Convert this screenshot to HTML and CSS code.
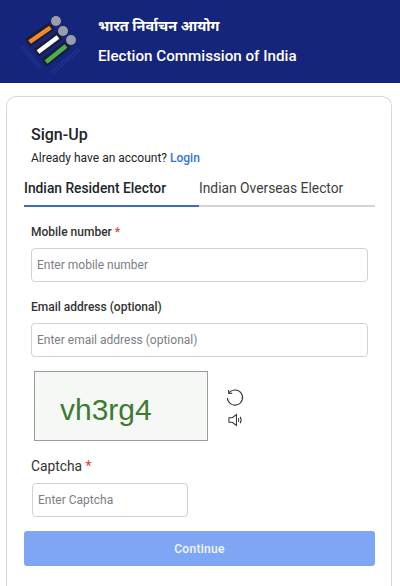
FILE: index.html

```html
<!DOCTYPE html>
<html lang="en">
<head>
  <meta charset="UTF-8">
  <meta name="viewport" content="width=device-width, initial-scale=1">
  <title>Sign-Up</title>
  <link rel="stylesheet" href="styles.css">
</head>
<body>
  <header class="topbar">
    <svg class="logo" width="62" height="70" viewBox="20 3 62 70" fill="none">
      <path d="M22 41 L40 63" stroke="#20308a" stroke-width="5" stroke-dasharray="2 1"/>
      <path d="M52 67 L80 44" stroke="#20308a" stroke-width="5" stroke-dasharray="2 1"/>
      <path d="M27.5 38 L52 20.5" stroke="#1b1d33" stroke-width="9"/>
      <path d="M36 48 L60 30.5" stroke="#1b1d33" stroke-width="9"/>
      <path d="M44 58 L68 39.5" stroke="#1b1d33" stroke-width="9"/>
      <path d="M29.5 37 L50.5 22.5" stroke="#f08a2c" stroke-width="4.5"/>
      <path d="M38 47 L58 32" stroke="#ffffff" stroke-width="4.5"/>
      <path d="M46 57 L66 41" stroke="#4caf50" stroke-width="4.5"/>
      <circle cx="56" cy="16" r="5" fill="#9a9ea8"/>
      <circle cx="63" cy="26" r="5" fill="#9a9ea8"/>
      <circle cx="71" cy="35" r="5" fill="#9a9ea8"/>
    </svg>
    <div class="brand">
      <div class="brand-hi">भारत निर्वाचन आयोग</div>
      <div class="brand-en">Election Commission of India</div>
    </div>
  </header>

  <main class="card">
    <h1 class="title">Sign-Up</h1>
    <p class="have-account">Already have an account? <a href="#" class="login">Login</a></p>

    <div class="tabs">
      <div class="tab active">Indian Resident Elector</div>
      <div class="tab">Indian Overseas Elector</div>
    </div>

    <div class="form">
      <label class="label">Mobile number <span class="req">*</span></label>
      <input class="input" type="text" placeholder="Enter mobile number">

      <label class="label label-email">Email address (optional)</label>
      <input class="input" type="text" placeholder="Enter email address (optional)">

      <div class="captcha-row">
        <div class="captcha-img">vh3rg4</div>
        <div class="captcha-actions">
          <svg width="20" height="20" viewBox="0 0 20 20" fill="none" stroke="#333" stroke-width="1.1">
            <path d="M4.2 4.6 A7.6 7.6 0 1 1 2.4 10"/>
            <path d="M3.6 2 L3.8 5.4 L7.2 5.2"/>
          </svg>
          <svg width="15" height="14" viewBox="0 0 16 14" fill="none" stroke="#333" stroke-width="1.1">
            <path d="M1 4.5 H4.5 L9 1.2 V12.8 L4.5 9.5 H1 Z"/>
            <path d="M11 5 Q12 7 11 9"/>
            <path d="M13 3.5 Q15 7 13 10.5"/>
          </svg>
        </div>
      </div>

      <label class="label label-captcha">Captcha <span class="req">*</span></label>
      <input class="input input-captcha" type="text" placeholder="Enter Captcha">
    </div>

    <button class="continue" type="button">Continue</button>
  </main>
</body>
</html>
```

FILE: styles.css

```css
html, body { height: 586px; overflow: hidden; }
body { margin: 0; background: #fff; font-family: Roboto, "Noto Sans", sans-serif; color: #212529; }

.topbar { height: 83px; background: #15257b; display: flex; align-items: center; padding-left: 20px; box-sizing: border-box; }
.logo { flex: none; margin-top: 3px; }
.brand { margin-left: 16px; padding-bottom: 2px; color: #fff; font-weight: 500; }
.brand-hi { font-size: 14.4px; line-height: 22px; font-weight: 700; }
.brand-en { font-size: 15.2px; line-height: 20px; margin-top: 8px; }

.card { margin: 13px 8px 0 6px; padding: 28px 16px 20px 17px; border: 1px solid #d8d8d8; border-bottom: none; border-radius: 10px 10px 0 0; }
.title { margin: 0 0 0 7px; font-size: 16px; line-height: 20px; font-weight: 500; }
.have-account { margin: 5px 0 0 7px; font-size: 12px; line-height: 16px; }
.login { color: #2f74e0; font-weight: 500; text-decoration: none; }

.tabs { display: flex; margin-top: 11px; border-bottom: 2px solid #d4d4d4; }
.tab { width: 175px; height: 28px; font-size: 13.8px; line-height: 22px; color: #3d3d3d; box-sizing: border-box; }
.tab.active { color: #212529; font-weight: 500; margin-bottom: -2px; height: 30px; border-bottom: 2px solid #3f6cb0; }

.form { padding: 0 7px; margin-top: 17px; }
.label { display: block; font-size: 12px; line-height: 16px; font-weight: 500; color: #333; }
.label-email { margin-top: 17px; }
.label-captcha { margin-top: 16px; font-size: 13.8px; font-weight: 400; line-height: 18px; }
.req { color: #e0413a; }

.input { display: block; width: 100%; height: 34px; margin-top: 8px; padding: 0 5px; box-sizing: border-box; border: 1px solid #cfd3d8; border-radius: 4px; background: #fff; font-family: inherit; font-size: 12px; }
.input::placeholder { color: #7b8086; opacity: 1; }
.input-captcha { width: 156px; margin-left: 1px; }

.captcha-row { display: flex; align-items: center; margin-top: 14px; padding-left: 3px; }
.captcha-img { width: 174px; height: 70px; box-sizing: border-box; border: 1px solid #9a9a9a; background: #f5f8f5; color: #3d7a32; font-family: "Liberation Sans", sans-serif; font-size: 30px; line-height: 76px; padding-left: 25px; }
.captcha-actions { display: flex; flex-direction: column; align-items: center; gap: 5px; margin-left: 17px; margin-top: 2px; }

.continue { display: block; width: 100%; height: 35px; margin-top: 14px; border: none; border-radius: 3px; background: #7fa6f5; color: #f4f7fe; font-family: inherit; font-size: 12px; font-weight: 500; letter-spacing: 0.3px; }
```
